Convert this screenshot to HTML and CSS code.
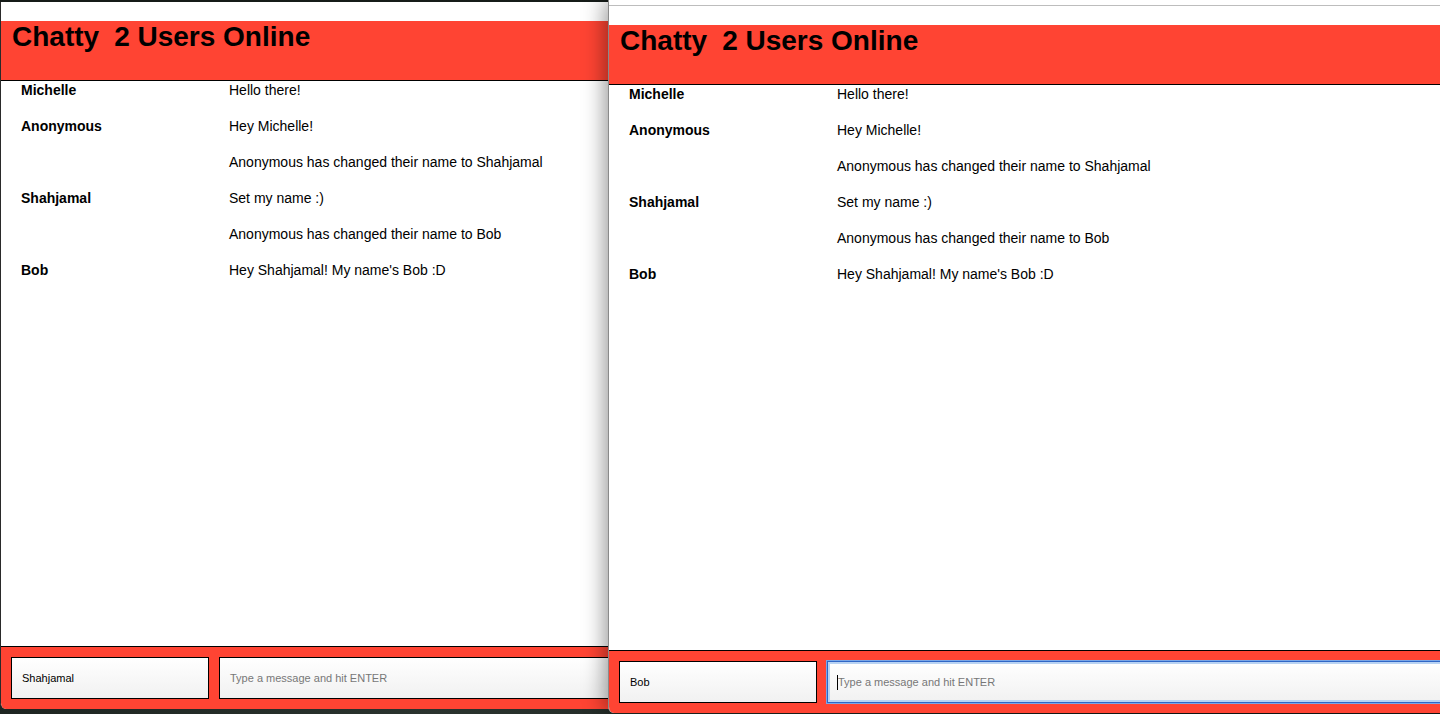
FILE: index.html
```html
<!DOCTYPE html>
<html lang="en">
<head>
<meta charset="utf-8">
<title>Chatty</title>
<link rel="stylesheet" href="styles.css">
</head>
<body>
<div class="desktop">
  <div class="window window-back">
    <div class="chrome"></div>
    <header class="navbar">
      <h1 class="brand">Chatty<span class="online">2 Users Online</span></h1>
    </header>
    <main class="messages">
      <div class="message"><span class="username">Michelle</span><span class="content">Hello there!</span></div>
      <div class="message"><span class="username">Anonymous</span><span class="content">Hey Michelle!</span></div>
      <div class="message system"><span class="username"></span><span class="content">Anonymous has changed their name to Shahjamal</span></div>
      <div class="message"><span class="username">Shahjamal</span><span class="content">Set my name :)</span></div>
      <div class="message system"><span class="username"></span><span class="content">Anonymous has changed their name to Bob</span></div>
      <div class="message"><span class="username">Bob</span><span class="content">Hey Shahjamal! My name's Bob :D</span></div>
    </main>
    <footer class="chatbar">
      <div class="field field-user">Shahjamal</div>
      <div class="field field-msg placeholder">Type a message and hit ENTER</div>
    </footer>
  </div>

  <div class="window window-front">
    <div class="chrome chrome-front"><div class="chrome-line"></div></div>
    <header class="navbar">
      <h1 class="brand">Chatty<span class="online">2 Users Online</span></h1>
    </header>
    <main class="messages">
      <div class="message"><span class="username">Michelle</span><span class="content">Hello there!</span></div>
      <div class="message"><span class="username">Anonymous</span><span class="content">Hey Michelle!</span></div>
      <div class="message system"><span class="username"></span><span class="content">Anonymous has changed their name to Shahjamal</span></div>
      <div class="message"><span class="username">Shahjamal</span><span class="content">Set my name :)</span></div>
      <div class="message system"><span class="username"></span><span class="content">Anonymous has changed their name to Bob</span></div>
      <div class="message"><span class="username">Bob</span><span class="content">Hey Shahjamal! My name's Bob :D</span></div>
    </main>
    <footer class="chatbar">
      <div class="field field-user">Bob</div>
      <div class="field field-msg placeholder focused"><span class="caret"></span>Type a message and hit ENTER</div>
    </footer>
  </div>
</div>
</body>
</html>
```

FILE: styles.css
```css
html, body {
  margin: 0;
  padding: 0;
}

body {
  width: 1440px;
  height: 714px;
  overflow: hidden;
  background: #1c2421;
  font-family: "Liberation Sans", Arial, Helvetica, sans-serif;
  color: #000;
}

.desktop {
  position: relative;
  width: 1440px;
  height: 714px;
  overflow: hidden;
  background: radial-gradient(circle at 30% 100%, #2a332e 0%, #151b18 60%);
}

.window {
  position: absolute;
  display: flex;
  flex-direction: column;
  background: #fff;
  overflow: hidden;
  border-radius: 0 0 6px 6px;
}

.window-back {
  left: 0;
  top: 2px;
  width: 660px;
  height: 707px;
  border-left: 1px solid #2a2a2a;
}

.window-front {
  left: 608px;
  top: 0;
  width: 900px;
  height: 713px;
  border-left: 1px solid #8a8a8a;
  box-shadow: -3px 0 22px rgba(0, 0, 0, 0.42);
}

.chrome {
  height: 19px;
  flex: none;
  background: #fff;
}

.chrome-front {
  height: 25px;
  padding-top: 5px;
  box-sizing: border-box;
}

.chrome-line {
  height: 1px;
  background: #bdbdbd;
}

.navbar {
  flex: none;
  height: 59px;
  background: #ff4433;
  border-bottom: 1px solid #000;
}

.brand {
  margin: 0;
  padding: 0 0 0 11px;
  font-size: 28px;
  font-weight: bold;
  line-height: 32px;
  white-space: nowrap;
}

.online {
  margin-left: 15px;
}

.messages {
  flex: 1;
  min-height: 0;
  padding-top: 1px;
}

.message {
  display: flex;
  height: 36px;
  font-size: 14px;
  line-height: 16px;
}

.username {
  flex: none;
  width: 188px;
  padding-left: 20px;
  font-weight: bold;
}

.content {
  flex: 1;
  padding-left: 20px;
}

.chatbar {
  flex: none;
  display: flex;
  gap: 10px;
  padding: 10px;
  background: #ff4433;
  border-top: 1px solid #000;
}

.field {
  position: relative;
  box-sizing: border-box;
  height: 42px;
  border: 1px solid #000;
  background: linear-gradient(#ffffff, #f1f1f1);
  padding: 0 10px;
  font-size: 11px;
  line-height: 40px;
  white-space: nowrap;
}

.field-user {
  flex: none;
  width: 198px;
}

.field-msg {
  flex: 1;
}

.placeholder {
  color: #777;
}

.focused {
  border: 1px solid #2f66c6;
  box-shadow: 0 0 0 1px #7aa6e6, inset 0 0 0 2px #b9d3f3;
}

.caret {
  position: absolute;
  left: 9px;
  top: 13px;
  width: 1px;
  height: 15px;
  background: #000;
}
```
